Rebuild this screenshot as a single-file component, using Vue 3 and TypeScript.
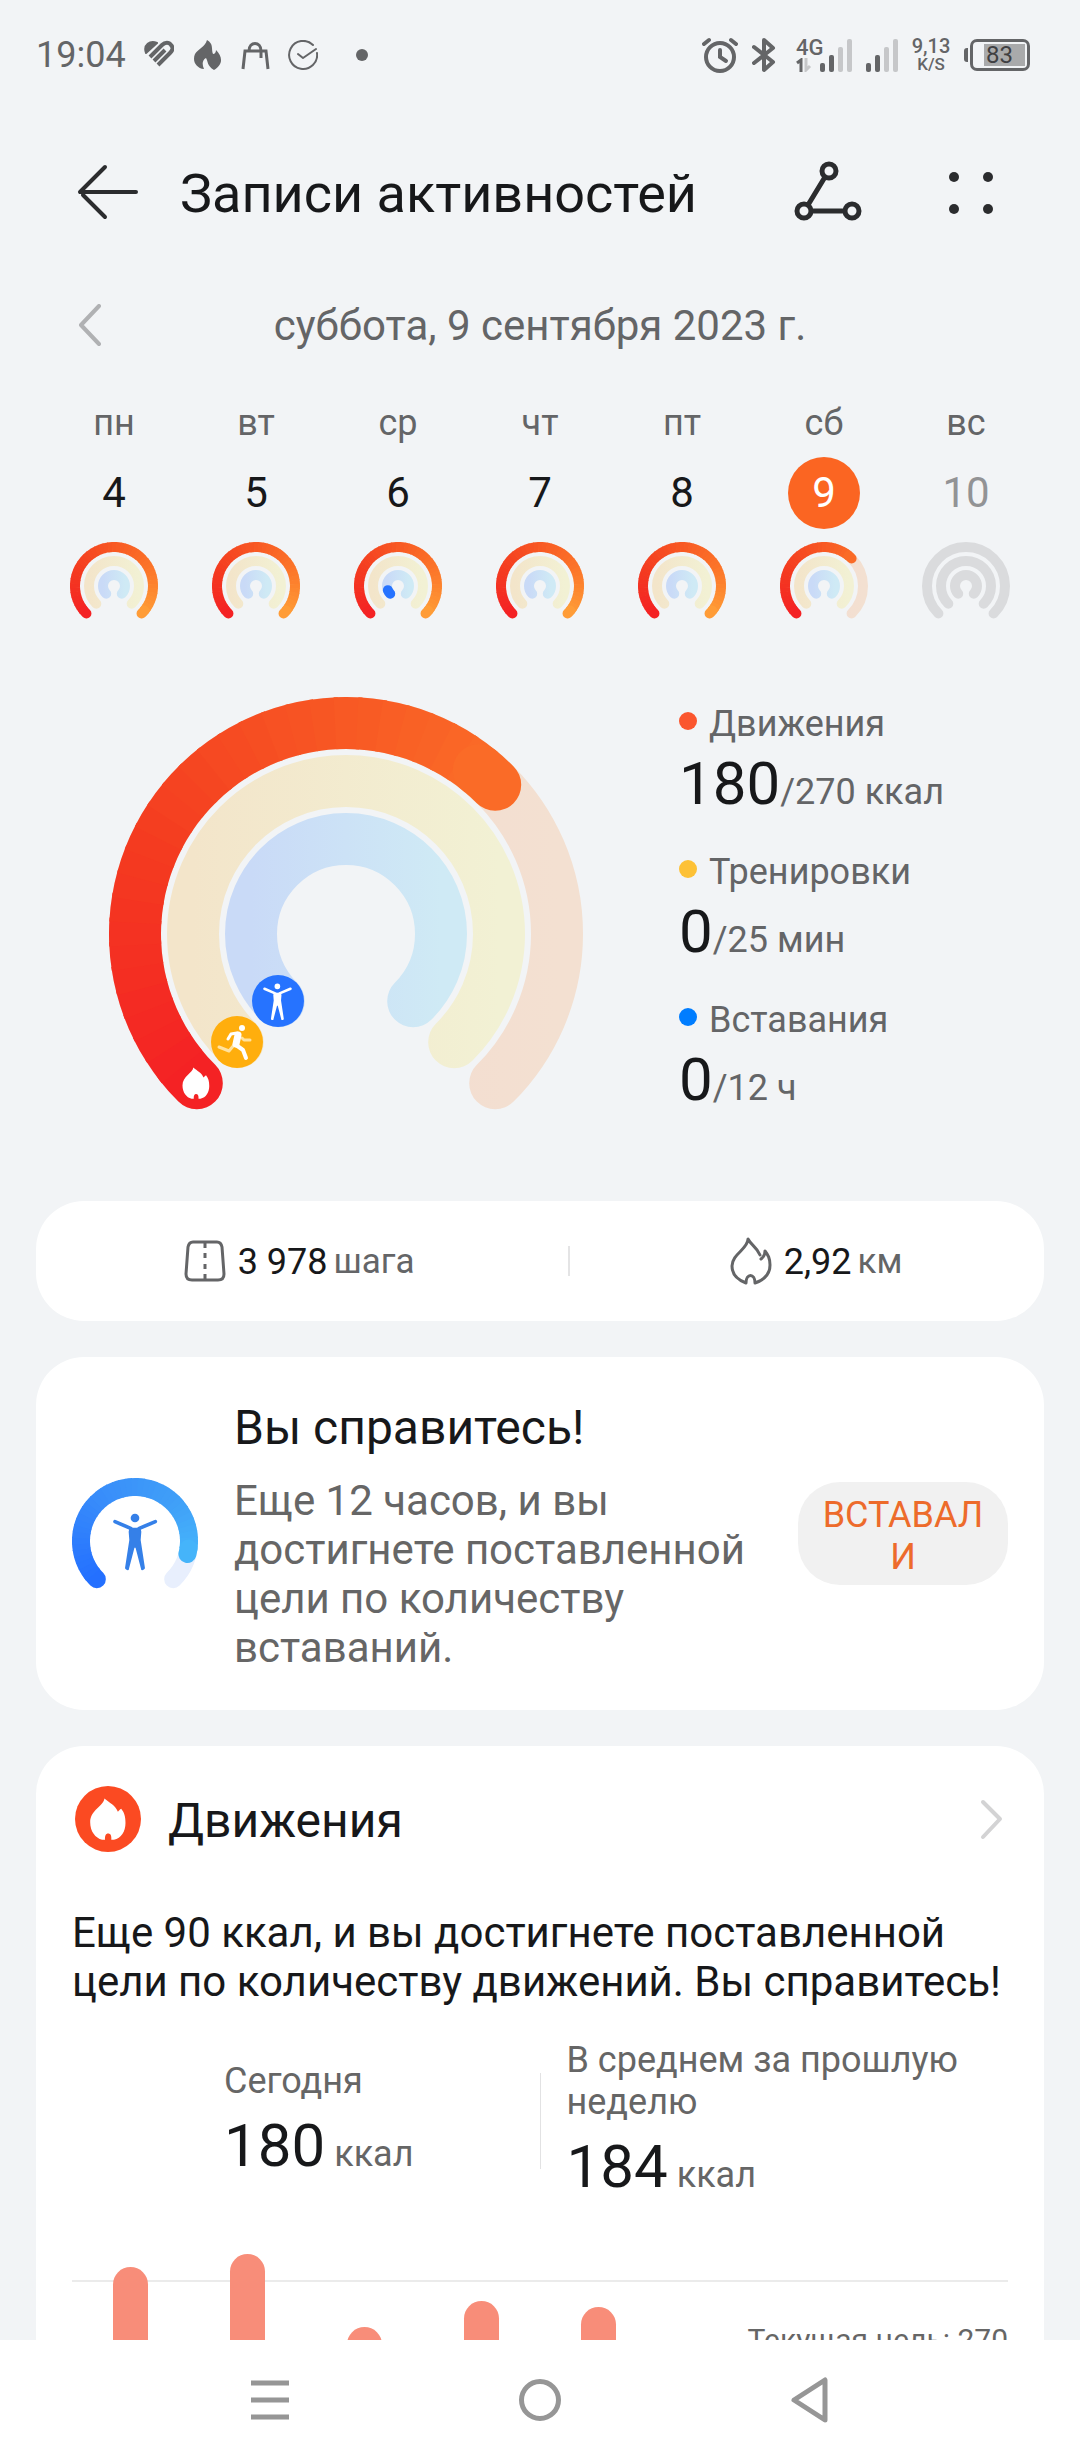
<script setup lang="ts">
interface Segment {
  d: string
  color: string
  cap: 'round' | 'butt'
}

interface Day {
  name: string
  date: number
  state: 'past' | 'selected' | 'future'
  move: number
  stand: number
}

type Rgb = [number, number, number]

const SWEEP = 270
const MOVE_COLORS: Rgb[] = [
  [244, 34, 36],
  [244, 60, 32],
  [248, 90, 36],
  [252, 120, 42],
  [255, 160, 56],
]
const STAND_COLORS: Rgb[] = [
  [36, 112, 255],
  [56, 140, 250],
  [64, 160, 248],
  [72, 194, 252],
]

const point = (cx: number, cy: number, r: number, deg: number): string => {
  const a = ((135 + deg) * Math.PI) / 180
  return `${(cx + r * Math.cos(a)).toFixed(2)} ${(cy + r * Math.sin(a)).toFixed(2)}`
}

const arc = (cx: number, cy: number, r: number, from = 0, to = SWEEP): string =>
  `M${point(cx, cy, r, from)}A${r} ${r} 0 ${to - from > 180 ? 1 : 0} 1 ${point(cx, cy, r, to)}`

const mix = (colors: Rgb[], t: number): string => {
  const pos = Math.min(t, 1) * (colors.length - 1)
  const i = Math.min(Math.floor(pos), colors.length - 2)
  const k = pos - i
  return `rgb(${colors[i].map((c, n) => Math.round(c + (colors[i + 1][n] - c) * k)).join(',')})`
}

// Splits an arc into short pieces so that its colour follows the angle.
const sweep = (cx: number, cy: number, r: number, share: number, colors: Rgb[]): Segment[] => {
  const end = SWEEP * share
  const count = Math.max(1, Math.round(end / 6))
  const step = end / count
  return Array.from({ length: count }, (_, i) => ({
    d: arc(cx, cy, r, i * step, Math.min(end, (i + 1) * step + 1)),
    color: mix(colors, (i * step) / SWEEP),
    cap: i === 0 || i === count - 1 ? 'round' : 'butt',
  }))
}

const days: Day[] = [
  { name: 'пн', date: 4, state: 'past', move: 1, stand: 0 },
  { name: 'вт', date: 5, state: 'past', move: 1, stand: 0 },
  { name: 'ср', date: 6, state: 'past', move: 1, stand: 1 / 12 },
  { name: 'чт', date: 7, state: 'past', move: 1, stand: 0 },
  { name: 'пт', date: 8, state: 'past', move: 1, stand: 0 },
  { name: 'сб', date: 9, state: 'selected', move: 180 / 270, stand: 0 },
  { name: 'вс', date: 10, state: 'future', move: 0, stand: 0 },
]

const goals = [
  { name: 'Движения', tone: 'move', value: '180', goal: '/270 ккал' },
  { name: 'Тренировки', tone: 'train', value: '0', goal: '/25 мин' },
  { name: 'Вставания', tone: 'stand', value: '0', goal: '/12 ч' },
]

const bars = [227, 240, 167, 193, 187]

const moveRing = sweep(237, 237, 211, 180 / 270, MOVE_COLORS)
const standRing = sweep(63, 63, 54, 0.885, STAND_COLORS)

const flame =
  'M89 38C88 60 46 72 46 110C46 138 62 158 82 163L91 163C90 150 94 144 100 144C108 144 111 150 110 163L118 163C140 158 153 138 153 112C153 92 149 80 140 69C136 71 134 74 130 78C122 58 105 52 89 38Z'
const person =
  'M209 200Q225 207 241 200L244 215L242 240L255 325Q252 332 244 330L227 265Q225 260 223 265L206 330Q198 332 195 325L208 240L206 215Z'
const personArms = 'M165 185L212 205M286 185L238 205'
</script>

<template>
  <div class="app">
    <svg class="defs" width="0" height="0" aria-hidden="true">
      <defs>
        <linearGradient id="track-move" x1="0" x2="1"><stop offset="0" stop-color="#f3d8d0" /><stop offset="1" stop-color="#f3e0d1" /></linearGradient>
        <linearGradient id="track-train" x1="0" x2="1"><stop offset="0" stop-color="#f3e5ca" /><stop offset="1" stop-color="#f2f1d4" /></linearGradient>
        <linearGradient id="track-stand" x1="0" x2="1"><stop offset="0" stop-color="#c9daf7" /><stop offset="1" stop-color="#cfeaf5" /></linearGradient>
      </defs>
    </svg>

    <div class="status">
      <div class="status-side left">
        <span class="clock">19:04</span>
        <svg width="30" height="30" viewBox="0 0 30 30">
          <path d="M2 13C-1 5 6 0 13 3Z" fill="#646567" stroke="#646567" stroke-width="2" stroke-linejoin="round" />
          <path d="M6 17L18 5C21 2 25 2 27 5C30 8 28 11 26 13L14 25M10 21L21 10" fill="none" stroke="#646567" stroke-width="4" />
        </svg>
        <svg width="30" height="30" viewBox="0 0 30 30">
          <path d="M15 0C22 4 19 9 21 14C23 14 24 12 24 10C31 17 31 25 22 30C15 26 16 21 14 18C10 20 10 25 12 29C4 28 0 21 3 14C6 9 13 7 15 0Z" fill="#646567" />
        </svg>
        <svg width="30" height="30" viewBox="0 0 30 30" fill="none" stroke="#646567" stroke-width="3">
          <path d="M3 29L5 11H26L28 29M9 11C9 1 21 1 21 11V18" />
        </svg>
        <svg width="30" height="30" viewBox="0 0 30 30" fill="none" stroke="#646567" stroke-width="2" stroke-linecap="round" stroke-linejoin="round">
          <path d="M25 5A14 14 0 1 0 29 13M10 14L15 18L28 9" />
        </svg>
        <svg width="32" height="30" viewBox="0 0 32 30"><circle cx="26" cy="15" r="6" fill="#646567" /></svg>
      </div>
      <div class="status-side right">
        <svg width="36" height="36" viewBox="0 0 36 36" fill="none" stroke="#646567" stroke-width="4" stroke-linecap="round">
          <circle cx="18" cy="20" r="14" />
          <path d="M2 7L7 3M29 3L34 7" />
          <path d="M18 13V20L24 24" />
        </svg>
        <svg width="30" height="36" viewBox="0 0 30 36" fill="none" stroke="#646567" stroke-width="4" stroke-linecap="round" stroke-linejoin="round">
          <path d="M2 10L21 25L12 33V3L21 11L2 26" />
        </svg>
        <div class="cell">
          <div class="network">
            <span>4G</span>
            <svg width="16" height="14" viewBox="0 0 16 14" fill="none" stroke-width="3">
              <path d="M1 5L5 2V14" stroke="#646567" />
              <path d="M10 0V12L14 8" stroke="#c6c7c9" />
            </svg>
          </div>
          <svg width="32" height="34" viewBox="0 0 32 34">
            <rect y="25" width="5" height="9" rx="2" fill="#646567" /><rect x="9" y="17" width="5" height="17" rx="2" fill="#646567" />
            <rect x="18" y="9" width="5" height="25" rx="2" fill="#c6c7c9" /><rect x="27" y="1" width="5" height="33" rx="2" fill="#c6c7c9" />
          </svg>
        </div>
        <svg width="32" height="34" viewBox="0 0 32 34">
          <rect y="25" width="5" height="9" rx="2" fill="#646567" /><rect x="9" y="17" width="5" height="17" rx="2" fill="#646567" />
          <rect x="18" y="9" width="5" height="25" rx="2" fill="#c6c7c9" /><rect x="27" y="1" width="5" height="33" rx="2" fill="#c6c7c9" />
        </svg>
        <div class="speed"><span>9,13</span><small>K/S</small></div>
        <div class="battery"><div class="battery-body"><span class="charge">83</span></div></div>
      </div>
    </div>

    <main class="content">
      <header class="header">
        <button class="plain" aria-label="Назад">
          <svg width="62" height="60" viewBox="0 0 62 60" fill="none" stroke="#2b2c2e" stroke-width="4" stroke-linecap="round" stroke-linejoin="round">
            <path d="M28 3L3 28H59M6 31L28 53" />
          </svg>
        </button>
        <h1>Записи активностей</h1>
        <button class="plain" aria-label="Поделиться">
          <svg width="68" height="66" viewBox="0 0 68 66" fill="none" stroke="#2b2c2e" stroke-width="5">
            <circle cx="35" cy="10" r="7" /><circle cx="10" cy="50" r="7" /><circle cx="58" cy="50" r="7" />
            <path d="M31 16L14 44M17 50H51" />
          </svg>
        </button>
        <button class="plain more" aria-label="Ещё">
          <svg width="46" height="44" viewBox="0 0 46 44" fill="#2b2c2e">
            <circle cx="6" cy="5" r="5" /><circle cx="40" cy="5" r="5" /><circle cx="6" cy="37" r="5" /><circle cx="40" cy="37" r="5" />
          </svg>
        </button>
      </header>

      <div class="date-row">
        <button class="plain" aria-label="Предыдущий день">
          <svg width="24" height="44" viewBox="0 0 24 44" fill="none" stroke="#b0b1b3" stroke-width="4" stroke-linecap="round" stroke-linejoin="round">
            <path d="M22 2L4 21L22 40" />
          </svg>
        </button>
        <time datetime="2023-09-09">суббота, 9 сентября 2023 г.</time>
      </div>

      <div class="week">
        <button v-for="day in days" :key="day.date" class="day" :class="day.state">
          <span class="weekday">{{ day.name }}</span>
          <span class="date">{{ day.date }}</span>
          <svg width="88" height="78" viewBox="0 0 88 78" fill="none" stroke-width="10" stroke-linecap="round">
            <path :d="arc(44, 44, 39)" :stroke="day.state === 'future' ? '#dadbdd' : 'url(#track-move)'" />
            <path :d="arc(44, 44, 25)" :stroke="day.state === 'future' ? '#dadbdd' : 'url(#track-train)'" />
            <path :d="arc(44, 44, 11)" :stroke="day.state === 'future' ? '#dadbdd' : 'url(#track-stand)'" />
            <template v-if="day.move > 0">
              <path v-for="(s, i) in sweep(44, 44, 39, day.move, MOVE_COLORS)" :key="i" :d="s.d" :stroke="s.color" :stroke-linecap="s.cap" />
            </template>
            <path v-if="day.stand > 0" :d="arc(44, 44, 11, 0, SWEEP * day.stand)" stroke="#2673ff" />
          </svg>
        </button>
      </div>

      <section class="summary">
        <svg class="rings" viewBox="0 0 474 413" fill="none" stroke-width="52" stroke-linecap="round">
          <path :d="arc(237, 237, 211)" stroke="url(#track-move)" />
          <path :d="arc(237, 237, 153)" stroke="url(#track-train)" />
          <path :d="arc(237, 237, 95)" stroke="url(#track-stand)" />
          <path v-for="(s, i) in moveRing" :key="i" :d="s.d" :stroke="s.color" :stroke-linecap="s.cap" />
          <g stroke="none">
            <path :d="flame" fill="#fff" transform="translate(62 361) scale(.25)" />
            <circle cx="128" cy="345" r="26" fill="#ffae0d" />
            <circle cx="169" cy="304" r="26" fill="#2673ff" />
          </g>
          <g transform="translate(128 345)" stroke="#fff" stroke-linejoin="round">
            <path d="M5 -4L7 -2H13M-3 3L-8 9L-18 5" stroke-width="3" stroke="#ffe2a0" />
            <path d="M-9 -3L-6 -8L0 -9" stroke-width="3" />
            <path d="M1 -7L-1 2" stroke-width="7" />
            <path d="M-1 3L6 8L9 16" stroke-width="4" />
            <circle cx="5" cy="-14" r="3" fill="#fff" stroke="none" />
          </g>
          <g transform="translate(120 252) scale(.215)" fill="#fff">
            <path :d="person" stroke="none" /><path :d="personArms" stroke="#fff" stroke-width="12" />
            <circle cx="225" cy="174" r="13" stroke="none" />
          </g>
        </svg>
        <dl class="goals">
          <div v-for="g in goals" :key="g.tone" class="goal">
            <dt :class="g.tone">{{ g.name }}</dt>
            <dd><b>{{ g.value }}</b><span>{{ g.goal }}</span></dd>
          </div>
        </dl>
      </section>

      <section class="card totals">
        <div class="total steps">
          <svg width="42" height="42" viewBox="0 0 42 42" fill="none" stroke="#646567" stroke-width="3">
            <path d="M9 2H33Q37 2 38 7L40 34Q40 40 34 40H8Q2 40 2 34L4 7Q5 2 9 2Z" />
            <path d="M21 3V8M21 13V18M21 24V29M21 34V39" />
          </svg>
          <b>3 978</b><span>шага</span>
        </div>
        <div class="total distance">
          <svg width="42" height="48" viewBox="0 0 42 48" fill="none" stroke="#646567" stroke-width="3" stroke-linejoin="round" stroke-linecap="round">
            <path d="M30 18C26 9 21 8 18 2C18 12 2 17 2 29C2 38 8 43 16 46C16 36 25 36 25 46C34 43 40 38 40 28C40 21 38 18 35 14Q35 19 31 22" />
          </svg>
          <b>2,92</b><span>км</span>
        </div>
      </section>

      <section class="card advice">
        <svg class="advice-icon" width="126" height="111" viewBox="0 0 126 111" fill="none" stroke-width="18" stroke-linecap="round">
          <path :d="arc(63, 63, 54)" stroke="#e8effd" />
          <path v-for="(s, i) in standRing" :key="i" :d="s.d" :stroke="s.color" :stroke-linecap="s.cap" />
          <g transform="translate(-12 -18) scale(.3333)" fill="#3580e8">
            <path :d="person" /><path :d="personArms" stroke="#3580e8" stroke-width="11" />
            <circle cx="225" cy="174" r="13" />
          </g>
        </svg>
        <div class="advice-text">
          <h2>Вы справитесь!</h2>
          <p>Еще 12 часов, и вы достигнете поставленной цели по количеству вставаний.</p>
        </div>
        <button class="stood">ВСТАВАЛИ</button>
      </section>

      <section class="card movement">
        <a class="movement-head" href="#">
          <svg width="66" height="66" viewBox="0 0 200 200">
            <circle cx="100" cy="100" r="100" fill="#fb4a22" /><path :d="flame" fill="#fff" />
          </svg>
          <h2>Движения</h2>
          <svg width="24" height="42" viewBox="0 0 24 42" fill="none" stroke="#d3d3d4" stroke-width="4" stroke-linecap="round" stroke-linejoin="round">
            <path d="M4 4L21 21L4 39" />
          </svg>
        </a>
        <p class="lead">Еще 90 ккал, и вы достигнете поставленной цели по количеству движений. Вы справитесь!</p>
        <div class="stats">
          <div class="stat today">
            <span>Сегодня</span>
            <div class="stat-value"><b>180</b><span>ккал</span></div>
          </div>
          <i class="rule"></i>
          <div class="stat">
            <span>В среднем за прошлую неделю</span>
            <div class="stat-value"><b>184</b><span>ккал</span></div>
          </div>
        </div>
        <div class="chart">
          <div class="gridline"></div>
          <span class="target">Текущая цель: 270</span>
          <div v-for="(h, i) in bars" :key="i" class="slot"><div class="bar" :style="{ height: h + 'px' }"></div></div>
        </div>
      </section>
    </main>

    <nav class="nav">
      <button class="plain" aria-label="Недавние">
        <svg width="44" height="44" viewBox="0 0 44 44" stroke="#969696" stroke-width="5"><path d="M3 5H41M3 22H41M3 39H41" /></svg>
      </button>
      <button class="plain" aria-label="Домой">
        <svg width="44" height="44" viewBox="0 0 44 44" fill="none" stroke="#969696" stroke-width="5"><circle cx="22" cy="22" r="18.500" /></svg>
      </button>
      <button class="plain" aria-label="Назад">
        <svg width="44" height="48" viewBox="0 0 44 48" fill="none" stroke="#969696" stroke-width="5" stroke-linejoin="round"><path d="M37 4V44L6 24Z" /></svg>
      </button>
    </nav>
  </div>
</template>

<style>
body {
  margin: 0;
  background: #f2f4f6;
}
</style>

<style scoped>
* {
  box-sizing: border-box;
}
.app {
  display: flex;
  flex-direction: column;
  height: 100vh;
  background: #f2f4f6;
  color: #17181a;
  font-family: Roboto, "Noto Sans", sans-serif;
  font-size: 36px;
  line-height: 42px;
}
svg {
  display: block;
  flex: none;
}
.defs {
  position: absolute;
}
h1, h2, p, dl, dd {
  margin: 0;
}
h2 {
  font-size: 48px;
  line-height: 56px;
  font-weight: 400;
}
b {
  font-weight: 400;
}
button {
  font: inherit;
  color: inherit;
  border: 0;
}
.plain {
  padding: 0;
  background: none;
}

.status {
  display: flex;
  flex: none;
  justify-content: space-between;
  align-items: center;
  height: 110px;
  padding: 0 50px 0 36px;
  color: #646567;
}
.status-side {
  display: flex;
  align-items: center;
}
.left {
  gap: 18px;
}
.right {
  gap: 14px;
}
.cell {
  display: flex;
}
.network {
  width: 24px;
  font-size: 22px;
  line-height: 20px;
  font-weight: 500;
}
.speed {
  display: flex;
  flex-direction: column;
  align-items: center;
  width: 38px;
  font-size: 20px;
  line-height: 18px;
  font-weight: 500;
}
.speed small {
  font-size: 17px;
  line-height: 18px;
}
.battery {
  display: flex;
  align-items: center;
}
.battery::before {
  content: "";
  width: 4px;
  height: 14px;
  margin-right: 2px;
  border-radius: 3px 0 0 3px;
  background: #646567;
}
.battery-body {
  display: flex;
  justify-content: flex-end;
  width: 60px;
  padding: 2px;
  border: 3px solid #646567;
  border-radius: 7px;
}
.charge {
  width: 41px;
  padding-left: 2px;
  background: #a9aaab;
  color: #3f4042;
  font-size: 24px;
  line-height: 22px;
}

.content {
  flex: 1;
  min-height: 0;
  overflow-y: auto;
  scrollbar-width: none;
}
.header {
  display: flex;
  align-items: center;
  height: 168px;
  padding: 0 86px 0 77px;
}
.header h1 {
  flex: 1;
  padding-left: 41px;
  font-size: 54px;
  line-height: 64px;
  font-weight: 400;
}
.more {
  margin-left: 86px;
}
.date-row {
  display: grid;
  grid-template-columns: 1fr auto 1fr;
  align-items: center;
  height: 95px;
  padding: 0 77px;
  color: #646567;
  font-size: 42px;
  line-height: 49px;
}
.week {
  display: grid;
  grid-template-columns: repeat(7, 1fr);
  padding: 29px 43px 0;
}
.day {
  display: flex;
  flex-direction: column;
  align-items: center;
  gap: 13px;
  padding: 0;
  background: none;
}
.weekday {
  color: #646567;
}
.date {
  width: 72px;
  border-radius: 50%;
  font-size: 42px;
  line-height: 72px;
}
.selected .date {
  background: #fb6522;
  color: #fff;
}
.future .date {
  color: #929395;
}

.summary {
  display: flex;
  align-items: flex-start;
  gap: 96px;
  padding: 77px 36px 91px 109px;
}
.rings {
  flex: 0 1 474px;
  min-width: 0;
}
.goals {
  display: flex;
  flex-direction: column;
  gap: 31px;
  padding-top: 6px;
  margin-bottom: -6px;
  white-space: nowrap;
}
.goal {
  display: flex;
  flex-direction: column;
  gap: 3px;
}
.goal dt {
  display: flex;
  align-items: center;
  gap: 12px;
  color: #646567;
}
.goal dt::before {
  content: "";
  width: 18px;
  height: 18px;
  margin-bottom: 6px;
  border-radius: 50%;
}
.move::before {
  background: #fb562e;
}
.train::before {
  background: #fdc136;
}
.stand::before {
  background: #007dff;
}
.goal dd,
.stat-value {
  display: flex;
  align-items: baseline;
}
.goal b,
.stat-value b {
  font-size: 60px;
  line-height: 72px;
}
.goal dd span {
  color: #646567;
}

.card {
  margin: 0 36px 36px;
  border-radius: 48px;
  background: #fff;
}
.totals {
  display: grid;
  grid-template-columns: 53fr 47fr;
  align-items: center;
  height: 120px;
}
.total {
  display: flex;
  align-items: center;
  justify-content: center;
  height: 48px;
}
.steps {
  padding-right: 8px;
  background: linear-gradient(#e4e4e5, #e4e4e5) right center / 2px 30px no-repeat;
}
.distance {
  padding-left: 18px;
}
.total b {
  padding: 2px 6px 0 12px;
}
.total span {
  padding-top: 2px;
  color: #646567;
  font-size: 35px;
}
.advice {
  display: flex;
  align-items: center;
  gap: 36px;
  padding: 38px 36px;
}
.advice-text {
  flex: 1;
  padding-top: 5px;
}
.advice-text p {
  padding-top: 20px;
  color: #666;
  font-size: 42px;
  line-height: 49px;
}
.stood {
  width: 210px;
  padding: 12px 24px 7px;
  border-radius: 42px;
  background: #f1f1f1;
  color: #ed6b2b;
  word-break: break-all;
}
.movement {
  padding: 36px 36px 0;
}
.movement-head {
  display: flex;
  align-items: center;
  height: 74px;
  padding: 0 5px 0 3px;
  color: inherit;
  text-decoration: none;
}
.movement-head h2 {
  flex: 1;
  padding: 3px 0 0 27px;
}
.lead {
  padding-top: 52px;
  font-size: 42px;
  line-height: 49px;
}
.stats {
  display: grid;
  grid-template-columns: 1fr 1px 1fr;
  align-items: center;
  padding-top: 33px;
}
.rule {
  height: 96px;
  background: #e2e2e3;
}
.stat {
  display: flex;
  flex-direction: column;
  gap: 8px;
  padding-left: 26px;
  color: #666;
}
.today {
  padding-left: 152px;
}
.stat-value {
  gap: 9px;
}
.stat-value b {
  color: #17181a;
}
.chart {
  position: relative;
  display: grid;
  grid-template-columns: repeat(8, 1fr);
  align-items: end;
  height: 240px;
  margin-top: 51px;
}
.gridline {
  position: absolute;
  top: 26px;
  left: 0;
  right: 0;
  height: 2px;
  background: #ebebeb;
}
.target {
  position: absolute;
  top: 65px;
  right: 0;
  color: #666;
  font-size: 30px;
}
.slot {
  position: relative;
  display: flex;
  justify-content: center;
}
.bar {
  width: 35px;
  border-radius: 18px 18px 0 0;
  background: #f88d79;
}

.nav {
  display: flex;
  flex: none;
  align-items: center;
  justify-content: space-evenly;
  height: 120px;
  padding: 0 22px;
  background: #fff;
}
.nav .plain {
  display: flex;
  align-items: center;
  justify-content: center;
  width: 44px;
}
</style>
